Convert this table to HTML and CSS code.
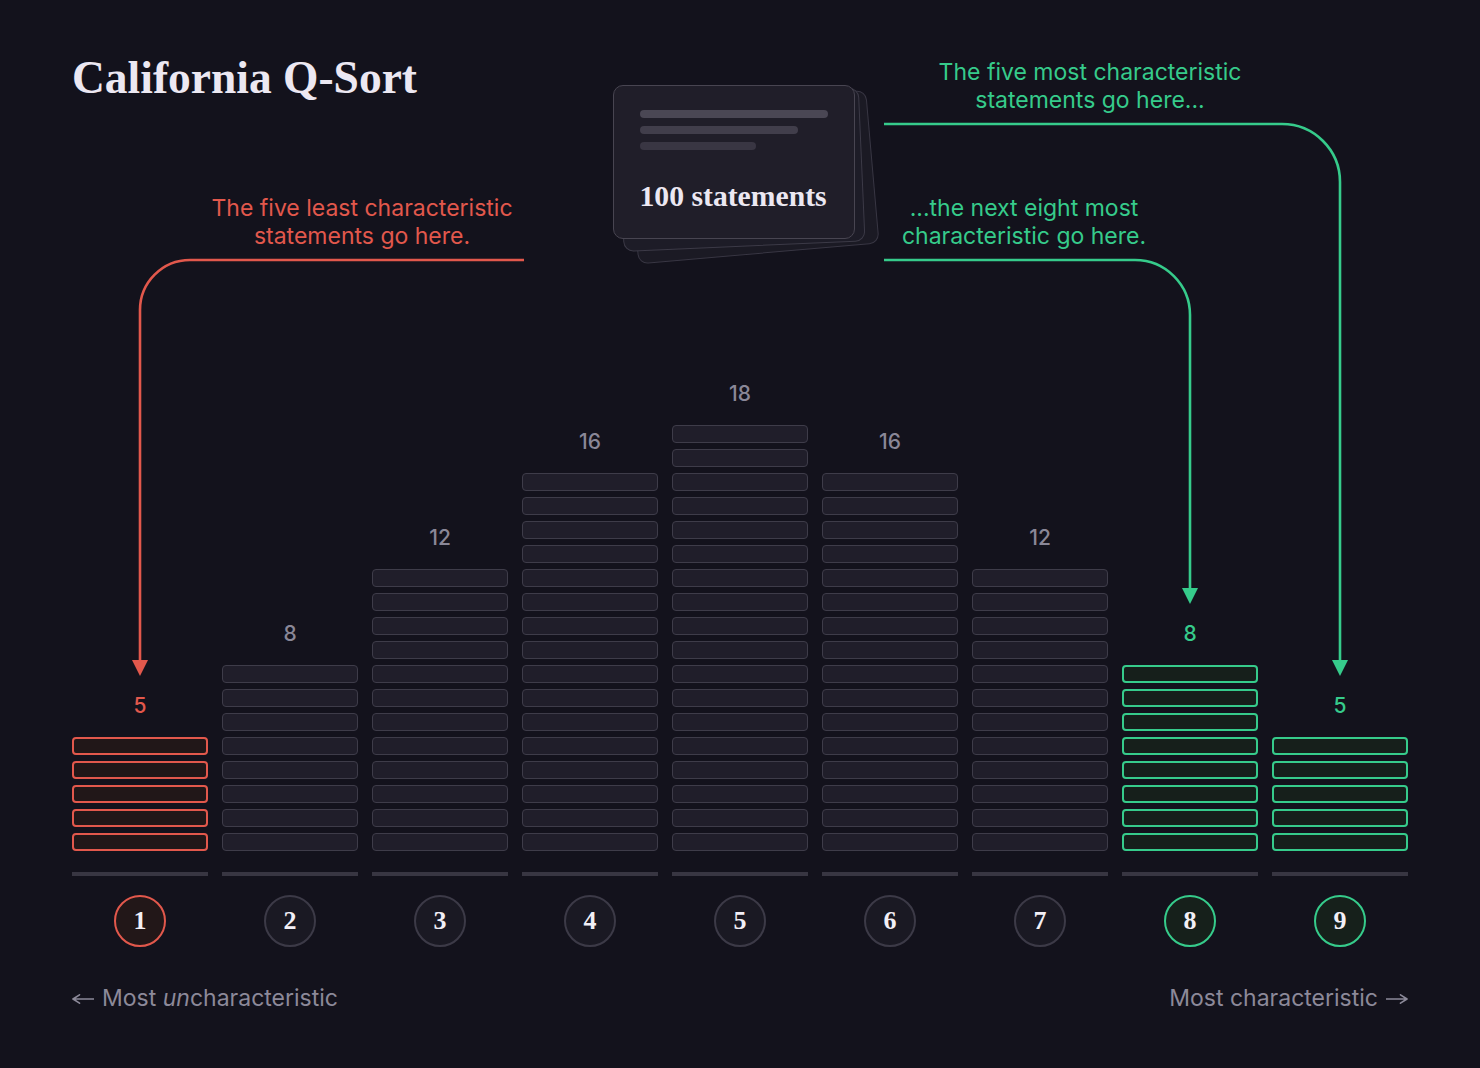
FILE: index.html
```html
<!DOCTYPE html>
<html lang="en">
<head>
<meta charset="utf-8">
<title>California Q-Sort</title>
<link rel="stylesheet" href="styles.css">
</head>
<body>
<div class="page">
  <header class="header">
    <h1 class="title">California Q-Sort</h1>
  </header>

  <div class="chart">
    <div class="col col-red">
      <div class="count">5</div>
      <div class="bars">
        <div class="bar"></div><div class="bar"></div><div class="bar"></div><div class="bar"></div><div class="bar"></div>
      </div>
      <div class="baseline"></div>
      <div class="pile">1</div>
    </div>
    <div class="col">
      <div class="count">8</div>
      <div class="bars">
        <div class="bar"></div><div class="bar"></div><div class="bar"></div><div class="bar"></div><div class="bar"></div><div class="bar"></div><div class="bar"></div><div class="bar"></div>
      </div>
      <div class="baseline"></div>
      <div class="pile">2</div>
    </div>
    <div class="col">
      <div class="count">12</div>
      <div class="bars">
        <div class="bar"></div><div class="bar"></div><div class="bar"></div><div class="bar"></div><div class="bar"></div><div class="bar"></div><div class="bar"></div><div class="bar"></div><div class="bar"></div><div class="bar"></div><div class="bar"></div><div class="bar"></div>
      </div>
      <div class="baseline"></div>
      <div class="pile">3</div>
    </div>
    <div class="col">
      <div class="count">16</div>
      <div class="bars">
        <div class="bar"></div><div class="bar"></div><div class="bar"></div><div class="bar"></div><div class="bar"></div><div class="bar"></div><div class="bar"></div><div class="bar"></div><div class="bar"></div><div class="bar"></div><div class="bar"></div><div class="bar"></div><div class="bar"></div><div class="bar"></div><div class="bar"></div><div class="bar"></div>
      </div>
      <div class="baseline"></div>
      <div class="pile">4</div>
    </div>
    <div class="col">
      <div class="count">18</div>
      <div class="bars">
        <div class="bar"></div><div class="bar"></div><div class="bar"></div><div class="bar"></div><div class="bar"></div><div class="bar"></div><div class="bar"></div><div class="bar"></div><div class="bar"></div><div class="bar"></div><div class="bar"></div><div class="bar"></div><div class="bar"></div><div class="bar"></div><div class="bar"></div><div class="bar"></div><div class="bar"></div><div class="bar"></div>
      </div>
      <div class="baseline"></div>
      <div class="pile">5</div>
    </div>
    <div class="col">
      <div class="count">16</div>
      <div class="bars">
        <div class="bar"></div><div class="bar"></div><div class="bar"></div><div class="bar"></div><div class="bar"></div><div class="bar"></div><div class="bar"></div><div class="bar"></div><div class="bar"></div><div class="bar"></div><div class="bar"></div><div class="bar"></div><div class="bar"></div><div class="bar"></div><div class="bar"></div><div class="bar"></div>
      </div>
      <div class="baseline"></div>
      <div class="pile">6</div>
    </div>
    <div class="col">
      <div class="count">12</div>
      <div class="bars">
        <div class="bar"></div><div class="bar"></div><div class="bar"></div><div class="bar"></div><div class="bar"></div><div class="bar"></div><div class="bar"></div><div class="bar"></div><div class="bar"></div><div class="bar"></div><div class="bar"></div><div class="bar"></div>
      </div>
      <div class="baseline"></div>
      <div class="pile">7</div>
    </div>
    <div class="col col-green">
      <div class="count">8</div>
      <div class="bars">
        <div class="bar"></div><div class="bar"></div><div class="bar"></div><div class="bar"></div><div class="bar"></div><div class="bar"></div><div class="bar"></div><div class="bar"></div>
      </div>
      <div class="baseline"></div>
      <div class="pile">8</div>
    </div>
    <div class="col col-green">
      <div class="count">5</div>
      <div class="bars">
        <div class="bar"></div><div class="bar"></div><div class="bar"></div><div class="bar"></div><div class="bar"></div>
      </div>
      <div class="baseline"></div>
      <div class="pile">9</div>
    </div>
  </div>

  <footer class="legend">
    <span class="legend-item"><svg class="arrow" width="22" height="10" viewBox="0 0 22 10" aria-hidden="true"><path d="M1 5 H22 M7.5 0.8 L1 5 L7.5 9.2"/></svg><span>Most <em>un</em>characteristic</span></span>
    <span class="legend-item"><span>Most characteristic</span><svg class="arrow" width="22" height="10" viewBox="0 0 22 10" aria-hidden="true"><path d="M0 5 H21 M14.5 0.8 L21 5 L14.5 9.2"/></svg></span>
  </footer>

  <div class="deck">
    <div class="card card-back3"></div>
    <div class="card card-back2"></div>
    <div class="card card-front">
      <div class="line line-1"></div>
      <div class="line line-2"></div>
      <div class="line line-3"></div>
      <div class="card-label">100 statements</div>
    </div>
  </div>

  <p class="note note-least">The five least characteristic<br>statements go here.</p>
  <p class="note note-most">The five most characteristic<br>statements go here...</p>
  <p class="note note-next">...the next eight most<br>characteristic go here.</p>

  <svg class="connectors" width="1480" height="1068" viewBox="0 0 1480 1068" aria-hidden="true">
    <path class="wire wire-red" d="M524 260 H190 A50 50 0 0 0 140 310 V662"/>
    <polygon class="head-red" points="132,660 148,660 140,676"/>
    <path class="wire wire-green" d="M884 124 H1282 A58 58 0 0 1 1340 182 V662"/>
    <polygon class="head-green" points="1332,660 1348,660 1340,676"/>
    <path class="wire wire-green" d="M884 260 H1135 A55 55 0 0 1 1190 315 V590"/>
    <polygon class="head-green" points="1182,588 1198,588 1190,604"/>
  </svg>
</div>
</body>
</html>
```

FILE: styles.css
```css
* { box-sizing: border-box; }

html, body {
  margin: 0;
  padding: 0;
  background: #13121c;
}

body {
  font-family: Inter, "Noto Sans", sans-serif;
  color: #ece8f2;
}

.page {
  position: relative;
  width: 1480px;
  height: 1068px;
  padding: 0 72px;
  overflow: hidden;
}

.header {
  height: 382px;
  padding-top: 52px;
}

.title {
  margin: 0;
  font-family: "Liberation Serif", "Times New Roman", serif;
  font-weight: 700;
  font-size: 45.5px;
  line-height: 52px;
  color: #ece8f2;
  letter-spacing: 0;
}

/* chart */
.chart {
  display: flex;
  gap: 14px;
  align-items: flex-end;
}

.col {
  width: 136px;
  display: flex;
  flex-direction: column;
  align-items: stretch;
}

.count {
  text-align: center;
  font-size: 21px;
  line-height: 24px;
  font-weight: 500;
  color: #8a8797;
  margin-bottom: 19px;
}

.bars {
  display: flex;
  flex-direction: column;
  gap: 6px;
}

.bar {
  height: 18px;
  border-radius: 4px;
  background: #201e2a;
  border: 1.5px solid #3e3c49;
}

.baseline {
  height: 4px;
  margin-top: 21px;
  background: #383642;
}

.pile {
  width: 52px;
  height: 52px;
  margin: 19px auto 0;
  border-radius: 50%;
  border: 2px solid #3c3a47;
  background: #1a1923;
  display: flex;
  align-items: center;
  justify-content: center;
  font-family: "Liberation Serif", "Times New Roman", serif;
  font-weight: 700;
  font-size: 26px;
  line-height: 1;
  color: #f2eff6;
}

.col-red .count { color: #e2584c; }
.col-red .bar { border: 2px solid #e2584c; background: #211718; }
.col-red .pile { border-color: #e2584c; background: #221718; }

.col-green .count { color: #36cb8b; }
.col-green .bar { border: 2px solid #36cb8b; background: #161f1b; }
.col-green .pile { border-color: #36cb8b; background: #16201b; }

/* legend */
.legend {
  display: flex;
  justify-content: space-between;
  margin-top: 37px;
  font-size: 23px;
  line-height: 28px;
  color: #8c8999;
}

.legend-item {
  display: inline-flex;
  align-items: center;
  gap: 8px;
}

.legend em { font-style: italic; }

.legend .arrow {
  flex: none;
  margin-top: 2px;
  fill: none;
  stroke: #8c8999;
  stroke-width: 1.6;
  stroke-linecap: round;
  stroke-linejoin: round;
}

/* card deck (overlapping stack) */
.deck {
  position: absolute;
  left: 0;
  top: 0;
  width: 0;
  height: 0;
}

.card {
  position: absolute;
  width: 242px;
  height: 154px;
  border-radius: 10px;
  transform-origin: 0 0;
}

.card-back3 {
  left: 625px;
  top: 111px;
  transform: rotate(-5deg);
  background: #1b1a24;
  border: 1.5px solid #383643;
}

.card-back2 {
  left: 617px;
  top: 98px;
  transform: rotate(-2.5deg);
  background: #1d1c27;
  border: 1.5px solid #3c3a47;
}

.card-front {
  left: 613px;
  top: 85px;
  background: #201e29;
  border: 1.5px solid #484551;
  padding: 24px 25.5px 0;
  display: flex;
  flex-direction: column;
  gap: 8px;
}

.line {
  height: 8px;
  border-radius: 4px;
}

.line-1 { width: 188px; background: #4a4754; }
.line-2 { width: 158px; background: #413e4b; }
.line-3 { width: 116px; background: #393643; }

.card-label {
  margin-top: 21px;
  font-family: "Liberation Serif", "Times New Roman", serif;
  font-weight: 700;
  font-size: 29.7px;
  line-height: 34px;
  color: #ece8f2;
  white-space: nowrap;
}

/* annotations */
.note {
  position: absolute;
  margin: 0;
  width: 420px;
  text-align: center;
  font-size: 23px;
  line-height: 28px;
  font-weight: 400;
}

.note-least { left: 152px; top: 194px; color: #e2584c; }
.note-most  { left: 880px; top: 58px;  color: #36cb8b; }
.note-next  { left: 814px; top: 194px; color: #36cb8b; }

.connectors {
  position: absolute;
  left: 0;
  top: 0;
  pointer-events: none;
}

.wire {
  fill: none;
  stroke-width: 2.6;
}

.wire-red { stroke: #e2584c; }
.wire-green { stroke: #36cb8b; }
.head-red { fill: #e2584c; }
.head-green { fill: #36cb8b; }
```
